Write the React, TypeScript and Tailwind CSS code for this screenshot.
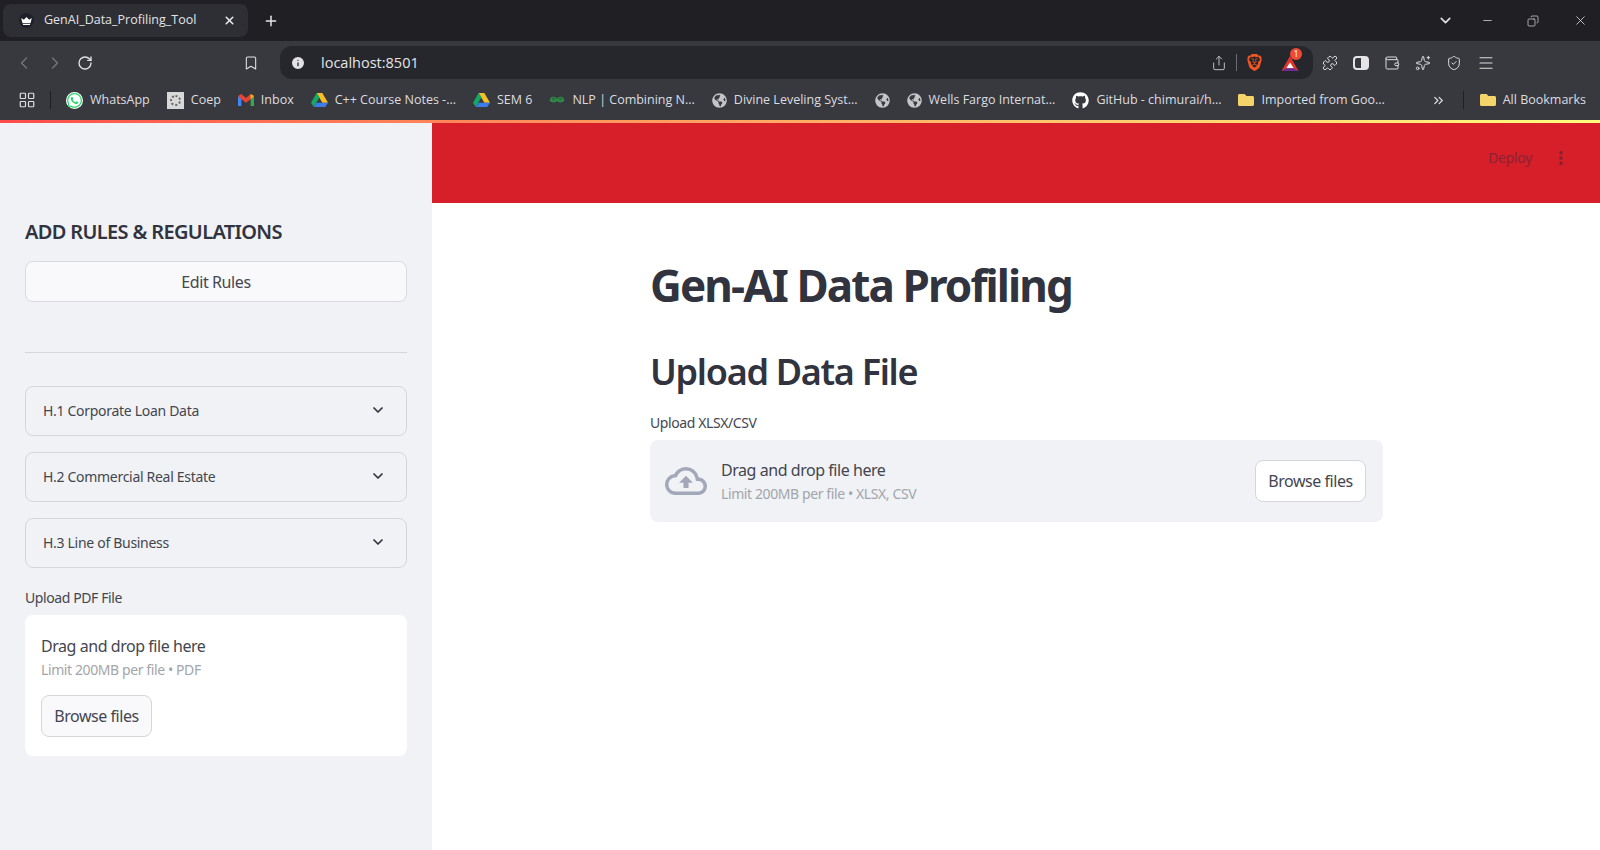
import { ChevronDown, ChevronLeft, ChevronRight, ChevronsRight, Bookmark, EllipsisVertical, Info, Menu, Minus, Plus, Puzzle, RotateCw, Share, Sparkles, Wallet, X, Copy, ShieldCheck, LayoutGrid } from "lucide-react";
import { FaGithub, FaGlobeAmericas, FaWhatsapp, FaFolder } from "react-icons/fa";
import { MdOutlineCloudUpload } from "react-icons/md";
import { SiBrave } from "react-icons/si";

const uiFont = "font-['Noto_Sans',sans-serif]";
const chromeFont = "font-['Open_Sans',sans-serif]";

function DriveIcon() {
  return (
    <svg viewBox="0 0 24 22" className="h-4 w-[17px] shrink-0">
      <path d="M8 1h8l8 14h-8z" fill="#f6bf26" />
      <path d="M8 1 0 15l4 6 8-14z" fill="#16a765" />
      <path d="M4 21h16l4-6H8z" fill="#3b7ded" />
    </svg>
  );
}

function GmailIcon() {
  return (
    <svg viewBox="0 0 24 18" className="h-3 w-4 shrink-0">
      <path d="M0 3v15h5V7z" fill="#4285f4" />
      <path d="M24 3v15h-5V7z" fill="#34a853" />
      <path d="M0 3 5 0l7 6 7-6 5 3-5 5-7 5-7-5z" fill="#ea4335" />
      <path d="M19 0l5 3-5 5z" fill="#fbbc04" />
    </svg>
  );
}

function CoepIcon() {
  return (
    <div className="flex h-[17px] w-[17px] shrink-0 items-center justify-center bg-[#d8d8d8]">
      <div className="h-[11px] w-[11px] rounded-full border-2 border-dotted border-[#666]" />
    </div>
  );
}

function NlpIcon() {
  return (
    <svg viewBox="0 0 20 10" className="h-2 w-4 shrink-0 fill-none stroke-[#2f8d46] stroke-[1.6]">
      <path d="M1 5h18M10 5C8 1 3 1 2 4s5 5 8 1c3 4 9 2 8-1s-6-3-8 1" />
    </svg>
  );
}

function BookmarkItem({ icon, label, className }: { icon: React.ReactNode; label?: string; className?: string }) {
  return (
    <div className={`flex items-center gap-[7px] whitespace-nowrap text-[12.5px] text-[#dcdde0] ${className ?? ""}`}>
      {icon}
      {label ? <span>{label}</span> : null}
    </div>
  );
}

function TabStrip() {
  return (
    <div className="flex h-[41px] items-center bg-[#1f1f24] pl-[3px]">
      <div className="flex h-[33px] w-[245px] items-center rounded-lg bg-[#2e2f34] pl-4 pr-3">
        <div className="flex h-[15px] w-[15px] items-center justify-center rounded-full bg-[#1f1f2b]">
          <svg viewBox="0 0 12 9" className="h-2 w-[11px] fill-white">
            <path d="M0 1l3 2 3-3 3 3 3-2-1.5 6h-9zM2 8h8v1H2z" />
          </svg>
        </div>
        <span className={`ml-[10px] flex-1 text-[12.5px] text-[#e3e3e6] ${chromeFont}`}>GenAI_Data_Profiling_Tool</span>
        <X size={13} strokeWidth={3} className="text-[#e8e8ea]" />
      </div>
      <Plus size={16} strokeWidth={2.2} className="ml-[15px] text-[#e8e8ea]" />
      <div className="ml-auto flex items-center text-[#dddde0]">
        <ChevronDown size={17} strokeWidth={2.4} className="mr-[27px]" />
        <Minus size={13} strokeWidth={1.4} className="mr-[33px]" />
        <Copy size={12} strokeWidth={1.4} className="mr-[34px] -scale-x-100" />
        <X size={15} strokeWidth={1.3} className="mr-[12px]" />
      </div>
    </div>
  );
}

function Toolbar() {
  return (
    <div className="flex h-[39px] items-start bg-[#38393e] pl-[14px] pt-[5px]">
      <div className="flex h-[33px] items-center">
        <ChevronLeft size={20} strokeWidth={1.5} className="text-[#77787c]" />
        <ChevronRight size={20} strokeWidth={1.5} className="ml-[11px] text-[#77787c]" />
        <RotateCw size={16} strokeWidth={2} className="ml-[12px] text-[#e2e2e4]" />
        <Bookmark size={16} strokeWidth={1.6} className="ml-[150px] text-[#e2e2e4]" />
      </div>
      <div className="ml-[21px] flex h-[33px] w-[1033px] items-center rounded-xl bg-[#26272c] pl-[10px] pr-[4px]">
        <Info size={16} className="fill-[#e3e3e5] text-[#26272c]" />
        <span className={`ml-[15px] flex-1 text-[14.5px] text-[#e4e4e6] ${chromeFont}`}>localhost:8501</span>
        <Share size={16} strokeWidth={1.4} className="text-[#c9c9cc]" />
        <div className="mx-[9px] h-[17px] w-px bg-[#6c6d71]" />
        <SiBrave size={17} className="text-[#f0561f]" />
        <div className="relative ml-[18px] mr-[10px] h-[18px] w-[18px]">
          <svg viewBox="0 0 18 16" className="mt-[2px] h-[15px] w-[18px]">
            <path d="M9 0l9 16H0z" fill="#e0362a" />
            <path d="M9 7l4 6H5z" fill="#fff" />
            <path d="M0 16l5-3h8l5 3z" fill="#6a2b94" />
          </svg>
          <span className="absolute -right-[3px] -top-[6px] flex h-[12px] w-[12px] items-center justify-center rounded-full bg-[#ee4a35] text-[8px] text-white">1</span>
        </div>
      </div>
      <div className="ml-[9px] flex h-[33px] items-center gap-[15px] text-[#dedee0]">
        <Puzzle size={16} strokeWidth={1.5} />
        <div className="flex h-[14px] w-4 rounded-sm border-2 border-[#e4e4e6]">
          <div className="ml-auto h-full w-[6px] bg-[#e4e4e6]" />
        </div>
        <Wallet size={16} strokeWidth={1.5} />
        <Sparkles size={16} strokeWidth={1.5} />
        <ShieldCheck size={16} strokeWidth={1.5} />
        <Menu size={18} strokeWidth={1.5} />
      </div>
    </div>
  );
}

function BookmarksBar() {
  return (
    <div className={`flex h-10 items-center bg-[#38393e] pl-[18px] ${chromeFont}`}>
      <LayoutGrid size={18} strokeWidth={1.6} className="text-[#dcdde0]" />
      <div className="ml-[14px] mr-[15px] h-[18px] w-px bg-[#1f1f24]" />
      <div className="flex flex-1 items-center gap-[17px]">
        <BookmarkItem icon={<FaWhatsapp size={17} className="rounded-full bg-white text-[#25d366]" />} label="WhatsApp" />
        <BookmarkItem icon={<CoepIcon />} label="Coep" />
        <BookmarkItem icon={<GmailIcon />} label="Inbox" />
        <BookmarkItem icon={<DriveIcon />} label="C++ Course Notes -..." />
        <BookmarkItem icon={<DriveIcon />} label="SEM 6" />
        <BookmarkItem icon={<NlpIcon />} label="NLP | Combining N..." />
        <BookmarkItem icon={<FaGlobeAmericas size={15} className="text-[#c4c5c8]" />} label="Divine Leveling Syst..." />
        <BookmarkItem icon={<FaGlobeAmericas size={15} className="text-[#c4c5c8]" />} />
        <BookmarkItem icon={<FaGlobeAmericas size={15} className="text-[#c4c5c8]" />} label="Wells Fargo Internat..." />
        <BookmarkItem icon={<FaGithub size={17} className="text-white" />} label="GitHub - chimurai/h..." />
        <BookmarkItem icon={<FaFolder size={16} className="text-[#f5d36b]" />} label="Imported from Goo..." />
      </div>
      <ChevronsRight size={15} className="mr-[17px] text-[#dcdde0]" />
      <div className="mr-[16px] h-[18px] w-px bg-[#1f1f24]" />
      <BookmarkItem icon={<FaFolder size={16} className="text-[#f5d36b]" />} label="All Bookmarks" className="mr-[14px]" />
    </div>
  );
}

function Expander({ label }: { label: string }) {
  return (
    <div className="flex h-[50px] items-center justify-between rounded-lg border border-[#d5d6db] pl-[17px] pr-5 text-sm text-[#44464f]">
      <span className="tracking-[-0.3px]">{label}</span>
      <ChevronDown size={16} strokeWidth={2.6} className="-mt-[2px] text-[#31333f]" />
    </div>
  );
}

function Sidebar() {
  return (
    <aside className="w-[432px] shrink-0 bg-[#f0f2f6] px-[25px] pt-[94px]">
      <h2 className="text-[20px] font-semibold leading-[30px] tracking-[-0.65px] text-[#31333f]">ADD RULES &amp; REGULATIONS</h2>
      <div className="mt-[14px] flex h-[41px] items-center justify-center rounded-lg border border-[#d9dade] bg-[#f9f9fb] text-[16px] tracking-[-0.4px] text-[#44464f]">
        Edit Rules
      </div>
      <div className="mt-[50px] h-px bg-[#d5d6db]" />
      <div className="mt-[33px] flex flex-col gap-4">
        <Expander label="H.1 Corporate Loan Data" />
        <Expander label="H.2 Commercial Real Estate" />
        <Expander label="H.3 Line of Business" />
      </div>
      <div className="mt-[20px] text-sm leading-5 tracking-[-0.4px] text-[#44464f]">Upload PDF File</div>
      <div className="mt-[7px] h-[141px] rounded-lg bg-white px-4 pt-[19px]">
        <div className="text-[16px] leading-6 tracking-[-0.45px] text-[#44464f]">Drag and drop file here</div>
        <div className="mt-[2px] text-sm leading-5 tracking-[-0.4px] text-[#a3a5ab]">Limit 200MB per file • PDF</div>
        <div className="mt-[15px] flex h-[42px] w-[111px] items-center justify-center rounded-lg border border-[#d5d6db] bg-[#f9f9fb] text-[16px] tracking-[-0.45px] text-[#44464f]">
          Browse files
        </div>
      </div>
    </aside>
  );
}

function Main() {
  return (
    <main className="flex min-w-0 flex-1 flex-col bg-white">
      <header className="flex h-20 items-center justify-end bg-[#d61f28] pr-[30px]">
        <span className="mt-[-10px] text-sm tracking-[-0.3px] text-[#8a2336]">Deploy</span>
        <EllipsisVertical size={18} strokeWidth={2.6} className="ml-5 mt-[-10px] text-[#7c2338]" />
      </header>
      <div className="ml-[218px] w-[733px] pt-[50px]">
        <h1 className="text-[44px] font-bold leading-[64px] tracking-[-1.9px] text-[#31333f]">Gen-AI Data Profiling</h1>
        <h2 className="mt-[30px] text-[36px] font-semibold leading-[50px] tracking-[-1.3px] text-[#31333f]">Upload Data File</h2>
        <div className="mt-[16px] text-sm leading-5 tracking-[-0.4px] text-[#44464f]">Upload XLSX/CSV</div>
        <div className="mt-[7px] flex h-[82px] items-center rounded-lg bg-[#f0f2f6] pl-[15px] pr-[17px]">
          <MdOutlineCloudUpload size={42} className="text-[#a3a8b8]" />
          <div className="ml-[14px] flex-1">
            <div className="text-[16px] leading-6 tracking-[-0.45px] text-[#44464f]">Drag and drop file here</div>
            <div className="mt-[2px] text-sm leading-5 tracking-[-0.4px] text-[#a3a5ab]">Limit 200MB per file • XLSX, CSV</div>
          </div>
          <div className="flex h-[42px] w-[111px] items-center justify-center rounded-lg border border-[#d5d6db] bg-white text-[16px] tracking-[-0.45px] text-[#44464f]">
            Browse files
          </div>
        </div>
      </div>
    </main>
  );
}

export default function App() {
  return (
    <div className={`flex h-[850px] w-[1600px] flex-col overflow-hidden ${uiFont}`}>
      <TabStrip />
      <Toolbar />
      <BookmarksBar />
      <div className="h-[3px] bg-gradient-to-r from-[#ff4b4b] to-[#fffd80]" />
      <div className="flex min-h-0 flex-1">
        <Sidebar />
        <Main />
      </div>
    </div>
  );
}
